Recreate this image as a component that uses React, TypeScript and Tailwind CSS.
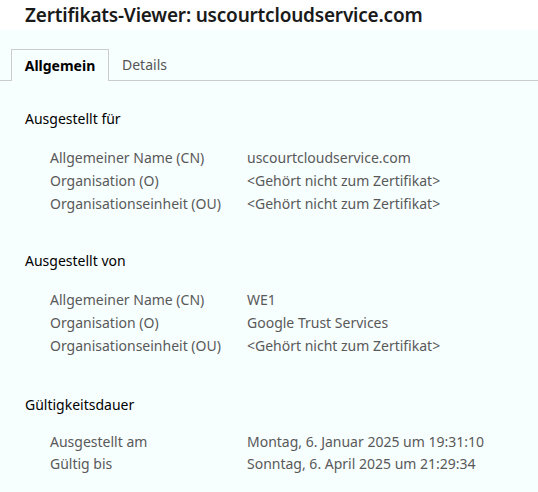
const sections = [
  {
    title: "Ausgestellt für",
    gap: "mb-[35px]",
    rowsGap: "mt-[16px]",
    rowH: "leading-[23px]",
    rows: [
      ["Allgemeiner Name (CN)", "uscourtcloudservice.com"],
      ["Organisation (O)", "<Gehört nicht zum Zertifikat>"],
      ["Organisationseinheit (OU)", "<Gehört nicht zum Zertifikat>"],
    ],
  },
  {
    title: "Ausgestellt von",
    gap: "mb-[37px]",
    rowsGap: "mt-[16px]",
    rowH: "leading-[23px]",
    rows: [
      ["Allgemeiner Name (CN)", "WE1"],
      ["Organisation (O)", "Google Trust Services"],
      ["Organisationseinheit (OU)", "<Gehört nicht zum Zertifikat>"],
    ],
  },
  {
    title: "Gültigkeitsdauer",
    gap: "mb-0",
    rowsGap: "mt-[15px]",
    rowH: "leading-[22px]",
    rows: [
      ["Ausgestellt am", "Montag, 6. Januar 2025 um 19:31:10"],
      ["Gültig bis", "Sonntag, 6. April 2025 um 21:29:34"],
    ],
  },
];

export default function App() {
  return (
    <div className="w-[538px] h-[492px] overflow-hidden bg-[#f7fefe] font-['Noto_Sans',sans-serif]">
      {/* Title bar */}
      <div className="h-[30px] bg-white pl-[25px] pt-px">
        <h1 className="text-[19px] leading-[28px] font-semibold tracking-[-0.2px] text-[#1a1a1a]">
          Zertifikats-Viewer: uscourtcloudservice.com
        </h1>
      </div>

      {/* Tabs */}
      <div className="mt-[19px] flex items-end border-b border-[#cccccc] pl-[11px]">
        <div className="-mb-px h-[32px] w-[98px] border border-b-0 border-[#cccccc] bg-[#f7fefe] flex items-center justify-center text-[14px] font-bold text-black">
          Allgemein
        </div>
        <div className="h-[31px] px-[13px] flex items-center text-[14px] text-[#555]">
          Details
        </div>
      </div>

      {/* Content */}
      <div className="pl-[25px] pt-[27px]">
        {sections.map((s) => (
          <div key={s.title} className={s.gap}>
            <div className="text-[14px] leading-[22px] text-black">{s.title}</div>
            <div className={`${s.rowsGap} pl-[25px] flex flex-col`}>
              {s.rows.map(([k, v]) => (
                <div key={k} className={`flex text-[14px] ${s.rowH} text-[#595959]`}>
                  <span className="w-[197px] shrink-0">{k}</span>
                  <span>{v}</span>
                </div>
              ))}
            </div>
          </div>
        ))}
      </div>
    </div>
  );
}
